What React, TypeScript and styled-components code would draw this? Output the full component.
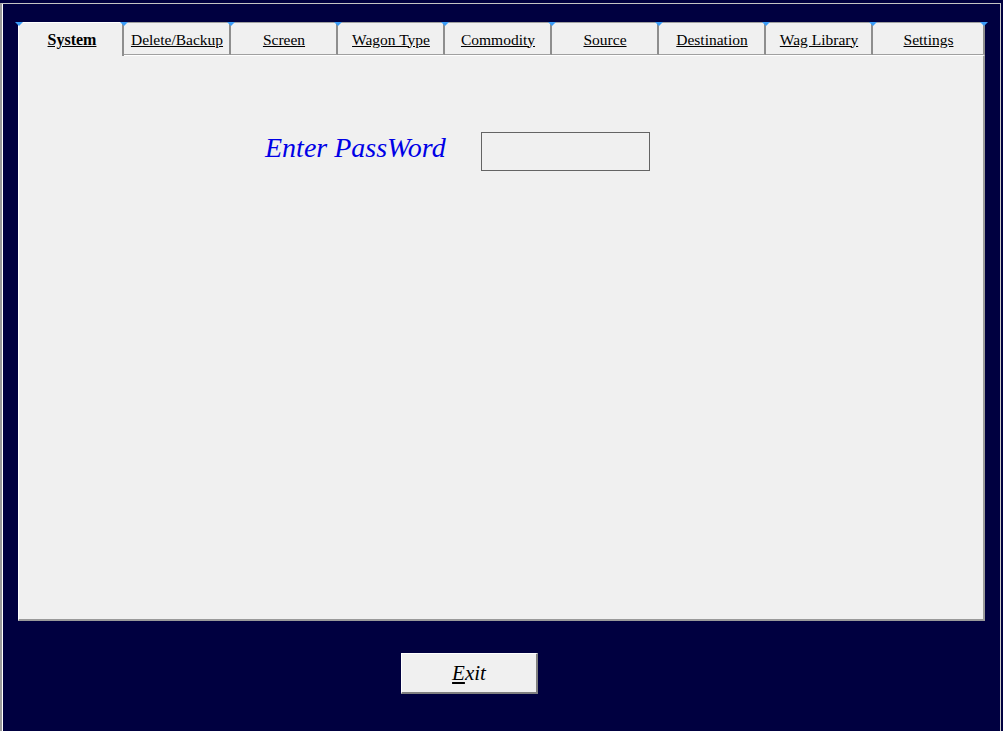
import React from "react";
import styled, { createGlobalStyle } from "styled-components";

const Global = createGlobalStyle`
  html, body { margin: 0; padding: 0; background: #000040; }
  body { font-family: "Liberation Serif", "Times New Roman", serif; }
`;

const Screen = styled.div`
  width: 1003px;
  height: 731px;
  background: #000040;
  overflow: hidden;
  padding-top: 3px;
  box-sizing: border-box;
`;

const Frame = styled.div`
  width: 1001px;
  height: 728px;
  box-sizing: border-box;
  border-top: 1px solid #c4c4c4;
  border-left: 2px solid #9a9a9a;
  border-right: 1px solid #c8c8c8;
  box-shadow: inset 1px 0 0 #ffffff;
  padding: 18px 0 0 16px;
  display: flex;
  flex-direction: column;
`;

const TabControl = styled.div`
  width: 967px;
  display: flex;
  flex-direction: column;
`;

const TabStrip = styled.div`
  display: grid;
  grid-template-columns: 106px repeat(7, 107px) 1fr;
  height: 33px;
  position: relative;
  z-index: 1;
`;

const Tab = styled.div<{ $active?: boolean }>`
  position: relative;
  box-sizing: border-box;
  background: #f0f0f0;
  border-top: 1px solid ${(p) => (p.$active ? "#ffffff" : "#a0a0a0")};
  border-left: ${(p) => (p.$active ? "1px solid #ffffff" : "none")};
  border-right: 2px solid #8e8e8e;
  border-bottom: ${(p) => (p.$active ? "none" : "1px solid #a0a0a0")};
  height: ${(p) => (p.$active ? "34px" : "33px")};
  display: flex;
  align-items: center;
  justify-content: center;
  padding: ${(p) => (p.$active ? "1px 0 1px 3px" : "2px 0 0 1px")};
  font-size: ${(p) => (p.$active ? "16px" : "15.5px")};
  font-weight: ${(p) => (p.$active ? "bold" : "normal")};
  color: #000;
  text-decoration: underline;
  white-space: nowrap;
`;

const Notch = styled.span<{ $side: "left" | "right" }>`
  position: absolute;
  top: -1px;
  ${(p) => (p.$side === "left" ? "left: -4px;" : "right: -5px;")}
  width: 0;
  height: 0;
  border-left: 4px solid transparent;
  border-right: 4px solid transparent;
  border-top: 4px solid #3a9cf8;
`;

const Panel = styled.div`
  box-sizing: border-box;
  height: 566px;
  background: #f0f0f0;
  border-top: 1px solid #ffffff;
  border-left: 1px solid #ffffff;
  border-right: 2px solid #9a9a9a;
  border-bottom: 2px solid #9a9a9a;
  padding: 76px 0 0 246px;
`;

const PasswordRow = styled.div`
  display: flex;
  align-items: flex-start;
`;

const PasswordLabel = styled.div`
  width: 216px;
  margin-top: 0;
  font-family: "Liberation Serif", "Times New Roman", serif;
  font-style: italic;
  font-size: 28px;
  line-height: 31px;
  color: #0000e6;
  white-space: nowrap;
`;

const PasswordInput = styled.input`
  box-sizing: border-box;
  width: 169px;
  height: 39px;
  border: 1px solid #646464;
  background: #f0f0f0;
  outline: none;
  padding: 0 4px;
  font-family: "Liberation Serif", serif;
  font-size: 16px;
`;

const ButtonRow = styled.div`
  display: flex;
  padding-left: 383px;
  margin-top: 32px;
`;

const ExitButton = styled.button`
  box-sizing: border-box;
  width: 137px;
  height: 41px;
  background: #f0f0f0;
  border-top: 1px solid #ffffff;
  border-left: 1px solid #ffffff;
  border-right: 2px solid #808080;
  border-bottom: 2px solid #808080;
  padding: 0;
  font-family: "Liberation Serif", "Times New Roman", serif;
  font-style: italic;
  font-size: 21px;
  color: #000;
  display: flex;
  align-items: center;
  justify-content: center;
  cursor: pointer;
`;

const Accel = styled.span`
  text-decoration: underline;
`;

const tabs = [
  "System",
  "Delete/Backup",
  "Screen",
  "Wagon Type",
  "Commodity",
  "Source",
  "Destination",
  "Wag Library",
  "Settings",
];

export default function App() {
  return (
    <>
      <Global />
      <Screen>
        <Frame>
          <TabControl>
            <TabStrip>
              {tabs.map((t, i) => (
                <Tab key={t} $active={i === 0}>
                  <Notch $side="left" />
                  {i === tabs.length - 1 && <Notch $side="right" />}
                  {t}
                </Tab>
              ))}
            </TabStrip>
            <Panel>
              <PasswordRow>
                <PasswordLabel>Enter PassWord</PasswordLabel>
                <PasswordInput type="password" />
              </PasswordRow>
            </Panel>
          </TabControl>
          <ButtonRow>
            <ExitButton>
              <Accel>E</Accel>xit
            </ExitButton>
          </ButtonRow>
        </Frame>
      </Screen>
    </>
  );
}
